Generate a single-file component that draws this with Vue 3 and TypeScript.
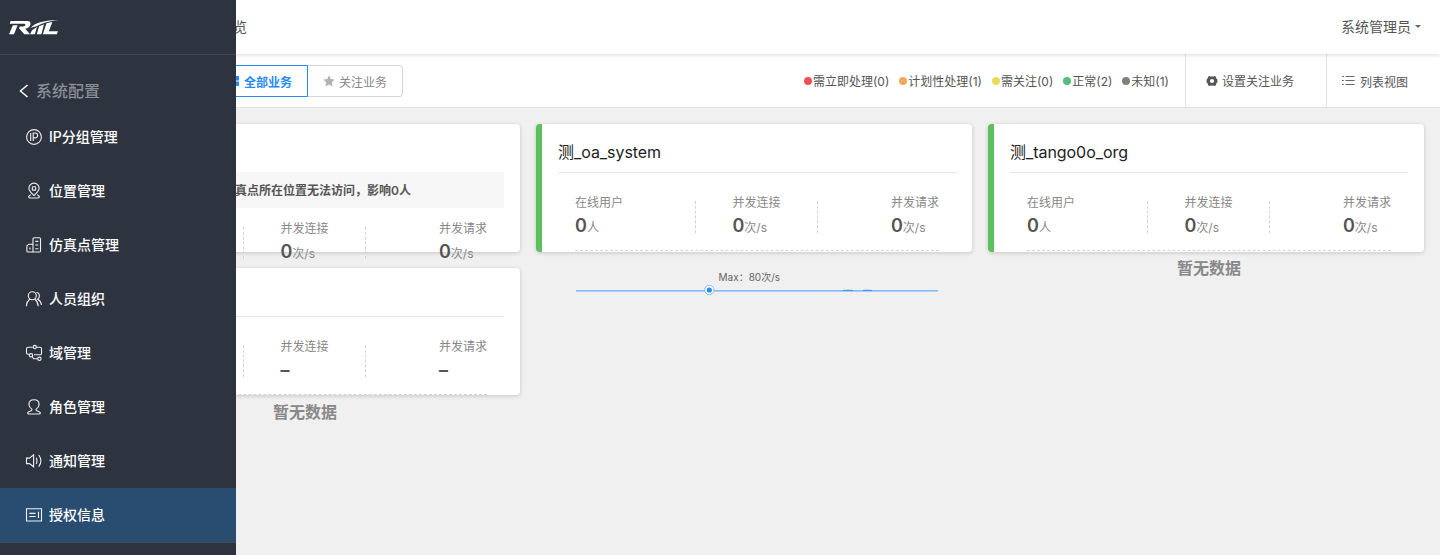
<script setup lang="ts">
interface MenuItem {
  label: string
  icon: string
  active?: boolean
}

interface Metric {
  label: string
  value: string
  unit: string
}

interface Service {
  name: string
  status: string
  alert?: string
  metrics: Metric[]
  chart: 'line' | 'empty'
}

const menu: MenuItem[] = [
  { label: 'IP分组管理', icon: 'ip' },
  { label: '位置管理', icon: 'location' },
  { label: '仿真点管理', icon: 'building' },
  { label: '人员组织', icon: 'people' },
  { label: '域管理', icon: 'domain' },
  { label: '角色管理', icon: 'role' },
  { label: '通知管理', icon: 'sound' },
  { label: '授权信息', icon: 'license', active: true },
]

const legend = [
  { label: '需立即处理(0)', tone: 'red' },
  { label: '计划性处理(1)', tone: 'orange' },
  { label: '需关注(0)', tone: 'yellow' },
  { label: '正常(2)', tone: 'green' },
  { label: '未知(1)', tone: 'grey' },
]

const metrics = (value: string, user: string, rate: string): Metric[] => [
  { label: '在线用户', value, unit: user },
  { label: '并发连接', value, unit: rate },
  { label: '并发请求', value, unit: rate },
]

const services: Service[] = [
  { name: '', status: 'planned', alert: '仿真点所在位置无法访问，影响0人', metrics: metrics('0', '人', '次/s'), chart: 'empty' },
  { name: '测_oa_system', status: 'normal', metrics: metrics('0', '人', '次/s'), chart: 'line' },
  { name: '测_tango0o_org', status: 'normal', metrics: metrics('0', '人', '次/s'), chart: 'empty' },
  { name: '', status: 'unknown', metrics: metrics('–', '', ''), chart: 'empty' },
]
</script>

<template>
  <div class="page">
    <aside class="sidebar">
      <div class="brand">
        <svg width="51" height="16" viewBox="0 0 51 16" fill="#fff">
          <path d="M1.6 1H18.5Q22.2 1 21.4 4.5Q20.6 8 16.2 8.7L21 14.2H15.4L10 8.3L10.8 6.5H14.2Q16.2 6.3 16.4 5Q16.6 3.8 15 3.8H.7Z" />
          <path d="M3.9 5.3H8.6L5 14.2H0Z" />
          <path d="M21.5 7.8Q29 .2 49.5.1Q36 1.6 27.6 6.3Z" />
          <path d="M21 14.2L23 10.3L28 7.1L25.8 14.2Z" />
          <path d="M27.8 14.2L30.1 6.3L35 4.2L32.4 14.2Z" />
          <path d="M37.5 3.3L43.4 2.1L39.8 11.3H49L47.8 14.2H33.8Z" />
        </svg>
      </div>
      <div class="section">
        <svg width="10" height="14" viewBox="0 0 10 14" fill="none" stroke="#fff" stroke-width="1.5"><path d="M8.5 1L1.5 7L8.5 13" /></svg>
        <span>系统配置</span>
      </div>
      <nav>
        <div v-for="item in menu" :key="item.label" class="menu-item" :class="{ active: item.active }">
          <svg class="menu-icon" width="18" height="18" viewBox="0 0 18 18">
            <g v-if="item.icon === 'ip'"><circle cx="9" cy="9" r="7.4" /><path d="M5.7 5V13M8.2 13V5H10.2A2.4 2.4 0 0 1 10.2 9.9H8.2" /></g>
            <g v-else-if="item.icon === 'location'"><path d="M9 13.5C6 10.6 3.9 8.8 3.9 6.2A5.1 5.1 0 0 1 14.1 6.2C14.1 8.8 12 10.6 9 13.5Z" /><rect x="7.3" y="4.7" width="3.4" height="3.4" rx=".7" /><path d="M5.7 12.7L3.6 14.6Q3.6 16 5 16H13Q14.4 16 14.4 14.6L12.3 12.7" /></g>
            <g v-else-if="item.icon === 'building'"><path d="M8 16V2.8Q8 1.7 9.1 1.7H14.4Q15.5 1.7 15.5 2.8V14.9Q15.5 16 14.4 16H3Q1.9 16 1.9 14.9V9.9L3.7 8.2H8M5 11.4V13.6M10.3 5.4H13.3M10.3 9H13.3M10.3 12.7H13.3" /></g>
            <g v-else-if="item.icon === 'people'"><circle cx="7.3" cy="5.8" r="4" /><path d="M1.5 16.2V14.6Q1.8 12 4.8 9M9.8 9Q12.8 11.5 13.3 16.2M11.4 2.5Q14.4 2.7 14.4 6Q14.4 8 12.7 9.2Q16 11 16.5 15" /></g>
            <g v-else-if="item.icon === 'domain'"><path d="M7.7 3.2H3.2Q1.5 3.2 1.5 4.9V9Q1.5 10.2 3 10.2H4M11.8 3.2H15Q16.5 3.2 16.5 4.7V9.4Q16.5 10.8 15 10.8H9M7 12.5L8.7 14.8H12.5" /><circle cx="9.8" cy="3" r="1.6" /><circle cx="6" cy="11.3" r="1.7" /><circle cx="14.4" cy="14.8" r="1.7" /></g>
            <g v-else-if="item.icon === 'role'"><path d="M7 11.4Q3.9 9.2 3.9 6.6Q3.9 1.7 9 1.7Q14.1 1.7 14.1 6.6Q14.1 9.2 11 11.4Q11 12.7 13.1 13.2Q15.4 14 15.4 15Q15.4 16 14 16H4Q2.6 16 2.6 15Q2.6 14 4.9 13.2Q7 12.7 7 11.4Z" /></g>
            <g v-else-if="item.icon === 'sound'"><path d="M1.5 6.1H4.5L8.6 2.9V14.8L4.5 11.6H1.5ZM11.2 5.7Q12.8 8.8 11.2 12M13.8 3Q18 8.8 13.8 14.6" /></g>
            <g v-else><path d="M1.5 2.7H16.5V15H1.5ZM4.3 7.4H10.6M4.3 10.5H10.6M13.5 5.8V12" /></g>
          </svg>
          <span>{{ item.label }}</span>
        </div>
      </nav>
    </aside>

    <main class="main">
      <header class="header">
        <span>业务服务健康总览</span>
        <div class="user">系统管理员<i class="caret"></i></div>
      </header>
      <div class="toolbar">
        <div class="tabs">
          <div class="tab selected">
            <svg width="12" height="12" viewBox="0 0 12 12" fill="#268bf5"><path d="M0 1H5V5.4H0ZM6 1H11V5.4H6ZM0 6.6H5V11H0ZM6 6.6H11V11H6Z" /></svg>
            <span>全部业务</span>
          </div>
          <div class="tab">
            <svg width="12" height="12" viewBox="0 0 12 12" fill="#b3b3b3"><path d="M6 .2L7.8 3.9L11.8 4.5L8.9 7.3L9.6 11.4L6 9.5L2.4 11.4L3.1 7.3L.2 4.5L4.2 3.9Z" /></svg>
            <span>关注业务</span>
          </div>
        </div>
        <div class="legend">
          <span v-for="entry in legend" :key="entry.label" class="legend-item"><i class="dot" :class="entry.tone"></i>{{ entry.label }}</span>
        </div>
        <div class="action settings">
          <svg width="12" height="12" viewBox="0 0 12 12"><path fill="#555" fill-rule="evenodd" d="M3.6.9Q4.6 1.9 6 1.3Q7.4 1.9 8.4.9L10 1.8Q9.7 3.6 11.4 4.4V7.6Q9.7 8.4 10 10.2L8.4 11.1Q7.4 10.1 6 10.7Q4.6 10.1 3.6 11.1L2 10.2Q2.3 8.4.6 7.6V4.4Q2.3 3.6 2 1.8ZM6 3.9A2.1 2.1 0 1 0 6 8.1A2.1 2.1 0 1 0 6 3.9Z" /></svg>
          <span>设置关注业务</span>
        </div>
        <div class="action view">
          <svg width="13" height="12" viewBox="0 0 13 12" stroke="#666" stroke-width="1.2"><path d="M0 1.5H1.8M3.5 1.5H12.5M0 5.5H1.8M3.5 5.5H12.5M0 9.5H1.8M3.5 9.5H12.5" /></svg>
          <span>列表视图</span>
        </div>
      </div>

      <section class="grid">
        <article v-for="(service, index) in services" :key="index" class="card" :class="service.status">
          <h3 class="title" :class="{ plain: service.alert }">{{ service.name }}</h3>
          <div v-if="service.alert" class="alert">{{ service.alert }}</div>
          <div class="body">
            <div class="metrics" :class="{ compact: service.alert }">
              <div v-for="metric in service.metrics" :key="metric.label" class="metric">
                <div>
                  <div class="metric-label">{{ metric.label }}</div>
                  <div class="metric-value"><b>{{ metric.value }}</b>{{ metric.unit }}</div>
                </div>
              </div>
            </div>
            <div v-if="service.chart === 'empty'" class="empty">暂无数据</div>
            <svg v-else class="chart" width="364" height="50" viewBox="0 0 364 50">
              <text x="174.3" y="30" text-anchor="middle">Max：80次/s</text>
              <path d="M1 39.8H363" stroke="#62adff" stroke-width="1.3" />
              <path d="M268 39.5Q273 38.9 278 39.5M288 39.5Q292 38.9 297 39.5" fill="none" stroke="#268bf5" stroke-width=".9" />
              <circle cx="134.3" cy="39" r="4.7" fill="#fff" stroke="#62adff" stroke-width=".8" />
              <circle cx="134.3" cy="39" r="2.6" fill="#268bf5" />
            </svg>
          </div>
        </article>
      </section>
    </main>
  </div>
</template>

<style>
body {
  margin: 0;
  overflow: hidden;
}
</style>

<style scoped>
.page {
  position: relative;
  box-sizing: border-box;
  height: 555px;
  padding-left: 68px;
  overflow: hidden;
  background: #f0f0f0;
  color: #555;
  font-family: Inter, "Noto Sans CJK SC", sans-serif;
  font-size: 12px;
}
.sidebar {
  position: absolute;
  z-index: 10;
  inset: 0 auto 0 0;
  width: 236px;
  background: #2d333f;
  color: #fff;
}
.brand {
  box-sizing: border-box;
  height: 55px;
  padding: 20px 0 0 9px;
  border-bottom: 1px solid #424855;
}
.brand svg {
  display: block;
}
.section {
  display: flex;
  align-items: center;
  gap: 7px;
  box-sizing: border-box;
  height: 55px;
  padding: 16px 0 0 19px;
  color: #8b8e95;
  font-size: 16px;
  font-weight: 500;
}
.section span,
.menu-item span {
  padding-bottom: 2px;
}
.menu-item {
  display: flex;
  align-items: center;
  gap: 6px;
  box-sizing: border-box;
  height: 54px;
  padding-left: 25px;
  font-size: 14px;
  font-weight: 500;
}
.menu-item.active {
  height: 55px;
  background: #294d70;
  border-bottom: 1px solid #454a55;
}
.menu-icon {
  margin-bottom: 1px;
  fill: none;
  stroke: #f0f1f3;
  stroke-width: 1.1;
}
.header {
  position: relative;
  z-index: 2;
  display: flex;
  align-items: center;
  justify-content: space-between;
  box-sizing: border-box;
  height: 54px;
  padding: 0 19px 2px 67px;
  background: #fff;
  box-shadow: 0 1px 4px rgba(0, 21, 41, 0.16);
  font-size: 14px;
}
.user {
  display: flex;
  align-items: center;
}
.caret {
  margin: 1px 0 0 4px;
  border: 3px solid transparent;
  border-top-color: #666;
  border-bottom: 0;
}
.toolbar {
  display: flex;
  align-items: center;
  height: 53px;
  border-bottom: 1px solid #e2e2e2;
  background: #fff;
}
.tabs {
  display: flex;
  margin-left: 144px;
}
.tab {
  display: flex;
  align-items: center;
  gap: 4px;
  box-sizing: border-box;
  width: 95px;
  height: 32px;
  padding-left: 15px;
  border: 1px solid #d5d5d5;
  border-left: 0;
  border-radius: 0 4px 4px 0;
  color: #888;
}
.tab span {
  padding-top: 1px;
}
.tab.selected {
  width: 96px;
  border: 1px solid #268bf5;
  border-radius: 4px 0 0 4px;
  color: #268bf5;
  font-weight: 600;
}
.legend {
  display: flex;
  gap: 10px;
  margin-left: auto;
  padding-right: 16px;
}
.legend-item {
  display: flex;
  align-items: center;
  gap: 1px;
}
.dot {
  width: 8px;
  height: 8px;
  border-radius: 50%;
}
.red { background: #eb5256; }
.orange { background: #f4a859; }
.yellow { background: #e8dc60; }
.green { background: #57bd7c; }
.grey { background: #808080; }
.action {
  display: flex;
  align-items: center;
  box-sizing: border-box;
  height: 53px;
  border-left: 1px solid #e2e2e2;
}
.settings {
  gap: 4px;
  width: 141px;
  padding-left: 20px;
}
.view {
  gap: 5px;
  width: 114px;
  padding-left: 15px;
}
.view span {
  padding-top: 2px;
}
.grid {
  display: grid;
  grid-template-columns: repeat(3, 436px);
  gap: 16px;
  padding: 16px;
}
.card {
  position: relative;
  z-index: 0;
  box-sizing: border-box;
  height: 128px;
  padding: 0 16px;
  border-left: 6px solid #5ac15c;
  border-radius: 4px;
  background: #fff;
  box-shadow: 0 1px 4px rgba(0, 0, 0, 0.18);
}
.card.planned { border-color: #f4a859; }
.card.unknown {
  height: 127px;
  border-color: #808080;
}
.title {
  box-sizing: border-box;
  height: 49px;
  margin: 0;
  padding-top: 7px;
  border-bottom: 1px solid #e5e5e5;
  color: #222;
  font-size: 16px;
  font-weight: 400;
  letter-spacing: -0.05px;
  line-height: 42px;
}
.title.plain {
  height: 48px;
  border: 0;
}
.alert {
  box-sizing: border-box;
  height: 36px;
  padding: 1px 0 0 117px;
  background: #f7f7f7;
  font-weight: 600;
  line-height: 36px;
}
.body {
  padding: 0 17px;
}
.metrics {
  display: flex;
  box-sizing: border-box;
  height: 78px;
  padding-top: 21px;
  border-bottom: 1px dashed #d4d4d4;
}
.metrics.compact {
  height: 69px;
  padding-top: 12px;
}
.metric {
  position: relative;
  display: flex;
  flex: 1;
}
.metric:nth-child(2) {
  box-sizing: border-box;
  justify-content: center;
  padding-right: 1px;
}
.metric:nth-child(3) { justify-content: flex-end; }
.metric:not(:last-child)::after {
  position: absolute;
  top: 7px;
  right: 0;
  height: 32px;
  border-right: 1px dashed #d4d4d4;
  content: "";
}
.metric-label {
  color: #888;
  line-height: 18px;
}
.metric-value {
  height: 28px;
  color: #888;
  line-height: 28px;
}
.metric-value b {
  color: #555;
  font-size: 18px;
  font-weight: 600;
}
.empty {
  color: #888;
  font-size: 16px;
  font-weight: 600;
  line-height: 34px;
  text-align: center;
}
.chart {
  display: block;
}
.chart text {
  fill: #666;
  font-size: 10px;
}
</style>
